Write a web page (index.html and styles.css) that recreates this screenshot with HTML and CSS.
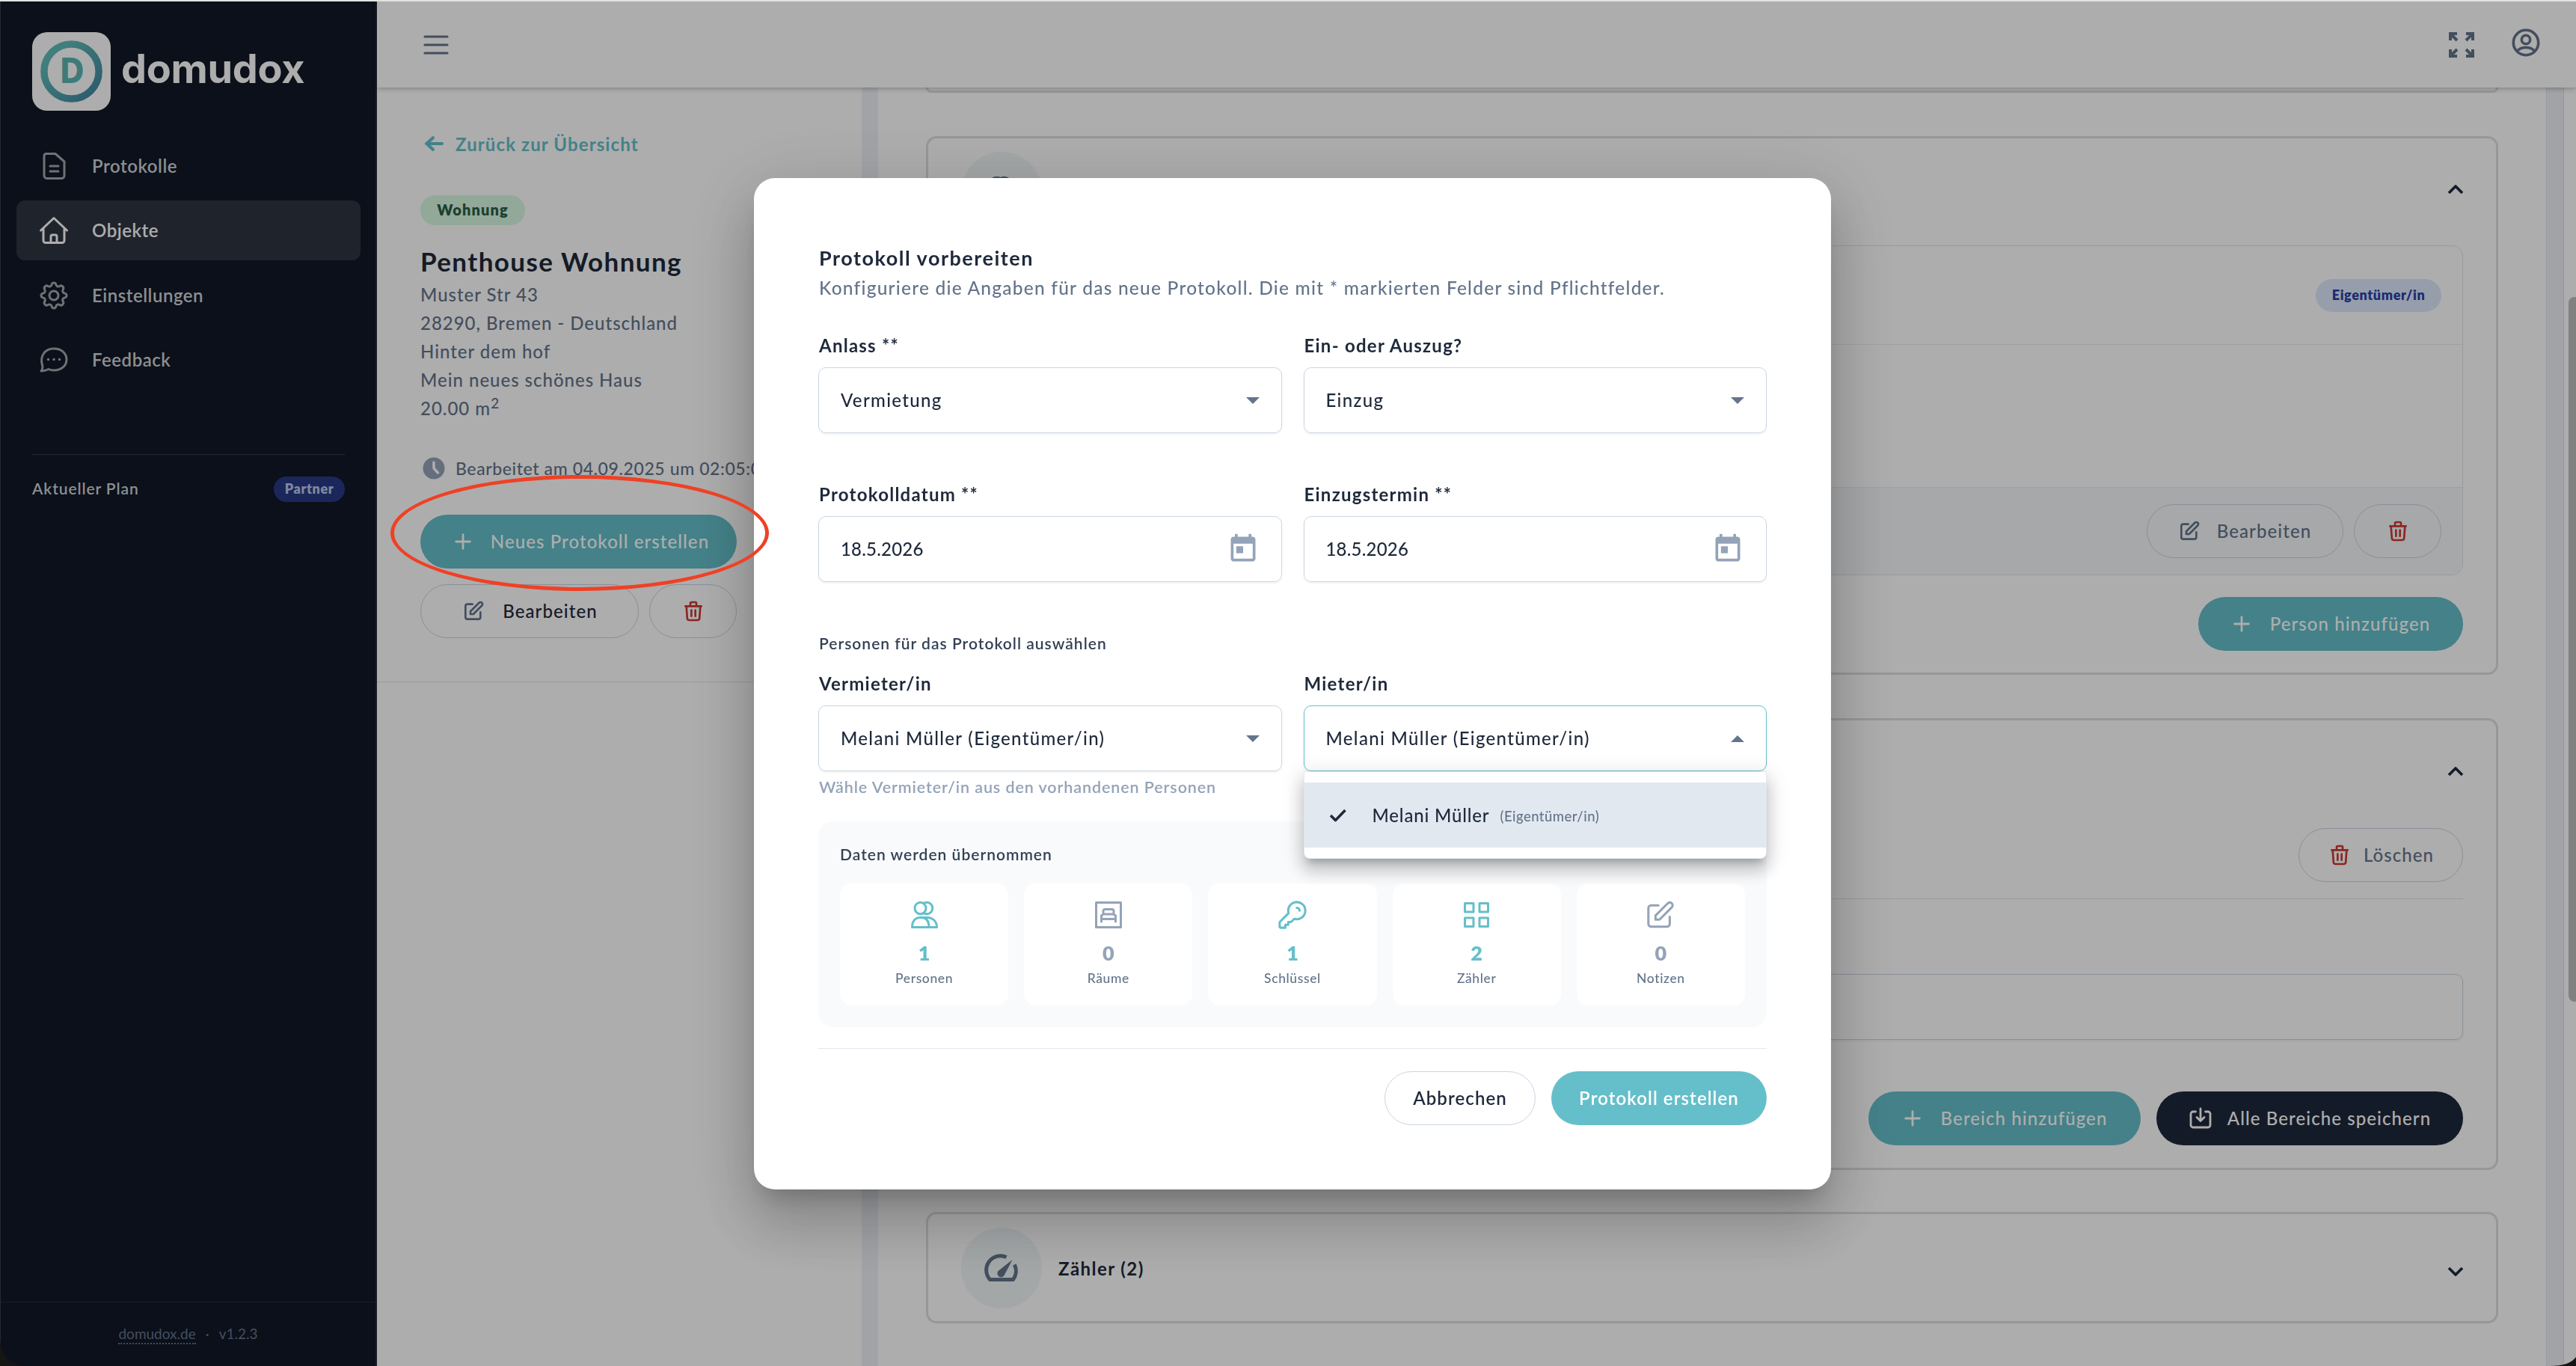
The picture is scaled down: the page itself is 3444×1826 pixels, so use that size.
FILE: index.html
```
<!DOCTYPE html>
<html lang="de">
<head>
  <meta charset="UTF-8" />
  <meta name="viewport" content="width=device-width, initial-scale=1.0"/>
  <title>domudox - Objekte</title>
  <link rel="stylesheet" href="styles.css">
</head>
<body>

  <svg class="sprite">
    <symbol id="i-edit" viewBox="0 0 24 24"><path d="M11 5H6a2 2 0 00-2 2v11a2 2 0 002 2h11a2 2 0 002-2v-5m-1.414-9.414a2 2 0 112.828 2.828L11.828 15H9v-2.828l8.586-8.586z"/></symbol>
    <symbol id="i-trash" viewBox="0 0 24 24"><path d="M19 7l-.867 12.142A2 2 0 0116.138 21H7.862a2 2 0 01-1.995-1.858L5 7m5 4v6m4-6v6m1-10V4a1 1 0 00-1-1h-4a1 1 0 00-1 1v3M4 7h16"/></symbol>
    <symbol id="i-plus" viewBox="0 0 24 24"><path d="M12 4v16M4 12h16"/></symbol>
    <symbol id="i-up" viewBox="0 0 24 24"><path d="M3 13l9-9 9 9" stroke-linecap="butt"/></symbol>
    <symbol id="i-down" viewBox="0 0 24 24"><path d="M3 12l9 9 9-9" stroke-linecap="butt"/></symbol>
    <symbol id="i-calendar" viewBox="0 0 24 24"><path d="M19 3h-1V1h-2v2H8V1H6v2H5c-1.11 0-1.99.9-1.99 2L3 19c0 1.1.89 2 2 2h14c1.1 0 2-.9 2-2V5c0-1.1-.9-2-2-2zm0 16H5V8h14v11zM7 10h5v5H7z"/></symbol>
    <symbol id="i-users" viewBox="0 0 40 40"><ellipse cx="14.500" cy="11" rx="7.500" ry="7.800"/><path d="M18.500 4.600a7.800 7.800 0 1 1 0 12.800M3.500 36.500c0-8 4-13 11.500-13s11 5 11 13zM16 23.500h7c8 0 13.500 5 13.500 13H26"/></symbol>
  </svg>

  <div class="app">
    <aside class="sidebar">
      <div class="brand">
        <svg class="logo" viewBox="0 0 105 105">
          <defs>
            <linearGradient id="ring" x1="0" y1="0" x2="1" y2="1">
              <stop offset="0.2" stop-color="#5fbcb8"/>
              <stop offset="1" stop-color="#41839e"/>
            </linearGradient>
          </defs>
          <rect width="105" height="105" rx="20" fill="#fff"/>
          <circle cx="52.500" cy="52.500" r="36.600" fill="none" stroke="url(#ring)" stroke-width="9.500"/>
          <text x="53.500" y="68" text-anchor="middle" font-family="DejaVu Sans, sans-serif" font-weight="700" font-size="47" textLength="34" lengthAdjust="spacingAndGlyphs" fill="#5bb5b3">D</text>
        </svg>
        <span class="brand-name">domudox</span>
      </div>

      <nav class="menu">
        <a class="menu-item">
          <svg viewBox="0 0 40 40"><path d="M9.500 3.500H22L34 14v18.500a4 4 0 0 1-4 4H11a4 4 0 0 1-4-4v-26a3 3 0 0 1 2.500-3zM15 20h11M15 27h11"/></svg>
          <span>Protokolle</span>
        </a>
        <a class="menu-item active">
          <svg viewBox="0 0 40 40"><path d="M2.500 20L20 3.500L37.500 20M6 17v16.500a3 3 0 0 0 3 3h22a3 3 0 0 0 3-3V17M16 36v-8a2 2 0 0 1 2-2h4a2 2 0 0 1 2 2v8"/></svg>
          <span>Objekte</span>
        </a>
        <a class="menu-item">
          <svg viewBox="0 0 40 40"><circle cx="20" cy="20" r="6"/><path d="M17.100 5.500c.7-3.400 5.100-3.400 5.800 0a3.200 3.200 0 0 0 4.900 2c2.800-1.900 6.300 1.500 4.500 4.500a3.200 3.200 0 0 0 2.200 5.100c3.400.7 3.400 5.100 0 5.800a3.200 3.200 0 0 0-2.200 5.100c1.800 3-1.700 6.400-4.500 4.500a3.200 3.200 0 0 0-4.900 2c-.7 3.400-5.100 3.400-5.800 0a3.200 3.200 0 0 0-4.900-2c-2.800 1.900-6.300-1.500-4.500-4.500a3.200 3.200 0 0 0-2.200-5.100c-3.400-.7-3.400-5.100 0-5.800a3.200 3.200 0 0 0 2.200-5.100c-1.800-3 1.700-6.400 4.500-4.500a3.200 3.200 0 0 0 4.900-2z"/></svg>
          <span>Einstellungen</span>
        </a>
        <a class="menu-item">
          <svg viewBox="0 0 40 40"><path d="M3 35c2-2.500 2.500-4.500 1.500-8C1 15 8 5 20 5c10 0 17 6 17 14.500S30 34 20 34c-3 0-5-.5-7-1.500C10 34 7 35 3 35z"/><path class="dots" d="M12.500 19.500h.1M20 19.500h.1M27.500 19.500h.1"/></svg>
          <span>Feedback</span>
        </a>
      </nav>

      <div class="plan">
        <span class="plan-label">Aktueller Plan</span>
        <span class="plan-badge">Partner</span>
      </div>

      <footer class="sidebar-footer">
        <a>domudox.de</a><i>·</i><span>v1.2.3</span>
      </footer>
    </aside>

    <div class="page">
      <header class="topbar">
        <svg class="burger" viewBox="0 0 36 28"><path d="M3 3h30M3 14h30M3 25h30"/></svg>
        <svg class="expand" viewBox="0 0 34 34"><path d="M2 11V2h9M2 2l9 9M23 2h9v9M32 2l-9 9M2 23v9h9M2 32l9-9M32 23v9h-9M32 32l-9-9"/></svg>
        <svg class="account" viewBox="0 0 40 40"><circle cx="20" cy="20" r="16.700"/><circle cx="20" cy="16" r="5.700"/><path d="M8.500 31c3-3.500 7-4.500 11.500-4.500s8.500 1 11.500 4.500"/></svg>
      </header>

      <div class="content">
        <section class="details">
          <a class="back">
            <svg viewBox="0 0 32 32"><path d="M27 16H6M15 8l-8.500 8 8.500 8"/></svg>
            <span>Zurück zur Übersicht</span>
          </a>
          <span class="type-badge">Wohnung</span>
          <h1>Penthouse Wohnung</h1>
          <p class="address">Muster Str 43<br>28290, Bremen - Deutschland<br>Hinter dem hof<br>Mein neues schönes Haus<br>20.00 m<sup>2</sup></p>
          <div class="edited">
            <svg viewBox="0 0 36 36"><circle cx="18" cy="18" r="14.500" fill="currentColor"/><path d="M18 10v8l5.500 6" fill="none" stroke="#fff" stroke-width="3.500" stroke-linecap="round"/></svg>
            <span>Bearbeitet am 04.09.2025 um 02:05:00</span>
          </div>
          <button class="btn primary btn-new"><svg><use href="#i-plus"/></svg>Neues Protokoll erstellen</button>
          <div class="btn-row">
            <button class="btn outline btn-edit"><svg><use href="#i-edit"/></svg>Bearbeiten</button>
            <button class="btn outline btn-trash"><svg><use href="#i-trash"/></svg></button>
          </div>
        </section>

        <section class="panels">
          <div class="panel stub"></div>

          <div class="panel">
            <div class="panel-head">
              <span class="round"><svg class="people-icon" viewBox="0 0 40 40"><use href="#i-users"/></svg></span>
              <svg class="chevron"><use href="#i-up"/></svg>
            </div>
            <div class="person">
              <div class="person-head"><span class="role">Eigentümer/in</span></div>
              <div class="person-body"></div>
              <div class="person-foot">
                <button class="btn outline muted btn-person"><svg><use href="#i-edit"/></svg>Bearbeiten</button>
                <button class="btn outline btn-trash"><svg><use href="#i-trash"/></svg></button>
              </div>
            </div>
            <div class="panel-actions">
              <button class="btn primary btn-add-person"><svg><use href="#i-plus"/></svg>Person hinzufügen</button>
            </div>
          </div>

          <div class="panel">
            <div class="panel-head">
              <span class="round"></span>
              <svg class="chevron"><use href="#i-up"/></svg>
            </div>
            <div class="area-head">
              <button class="btn outline muted btn-delete"><svg><use href="#i-trash"/></svg>Löschen</button>
            </div>
            <div class="area-input"></div>
            <div class="panel-actions area-actions">
              <button class="btn primary btn-area"><svg><use href="#i-plus"/></svg>Bereich hinzufügen</button>
              <button class="btn dark btn-save"><svg viewBox="0 0 32 32"><path d="M9.500 7H6a3 3 0 0 0-3 3v15a3 3 0 0 0 3 3h20a3 3 0 0 0 3-3V10a3 3 0 0 0-3-3h-3.500M16 3v16M11 14.500l5 5 5-5"/></svg>Alle Bereiche speichern</button>
            </div>
          </div>

          <div class="panel">
            <div class="panel-head">
              <span class="round"><svg class="gauge" viewBox="0 0 46 40"><path d="M29.500 5.500A19 19 0 0 0 7.500 35.500h31A19 19 0 0 0 40.300 15.500"/><path class="needle" d="M37.500 9L19 23.500a5 5 0 1 0 7.500 6.500z"/></svg></span>
              <span class="panel-title">Zähler (2)</span>
              <svg class="chevron"><use href="#i-down"/></svg>
            </div>
          </div>
        </section>

        <div class="gutter"></div>
        <div class="scrollbar"><div class="thumb"></div></div>
      </div>
    </div>
  </div>

  <div class="backdrop">
    <div class="modal">
      <h2>Protokoll vorbereiten</h2>
      <p class="subtitle">Konfiguriere die Angaben für das neue Protokoll. Die mit * markierten Felder sind Pflichtfelder.</p>

      <div class="row">
        <div class="field">
          <label>Anlass **</label>
          <div class="input"><span>Vermietung</span><i class="caret"></i></div>
        </div>
        <div class="field">
          <label>Ein- oder Auszug?</label>
          <div class="input"><span>Einzug</span><i class="caret"></i></div>
        </div>
      </div>

      <div class="row">
        <div class="field">
          <label>Protokolldatum **</label>
          <div class="input"><span class="date">18.5.2026</span><svg class="cal"><use href="#i-calendar"/></svg></div>
        </div>
        <div class="field">
          <label>Einzugstermin **</label>
          <div class="input"><span class="date">18.5.2026</span><svg class="cal"><use href="#i-calendar"/></svg></div>
        </div>
      </div>

      <p class="section-title">Personen für das Protokoll auswählen</p>
      <div class="row people">
        <div class="field">
          <label>Vermieter/in</label>
          <div class="input"><span>Melani Müller (Eigentümer/in)</span><i class="caret"></i></div>
          <p class="hint">Wähle Vermieter/in aus den vorhandenen Personen</p>
        </div>
        <div class="field">
          <label>Mieter/in</label>
          <div class="input open"><span>Melani Müller (Eigentümer/in)</span><i class="caret up"></i></div>
          <div class="dropdown">
            <div class="option">
              <svg viewBox="0 0 24 20"><path d="M2 10l6.500 6.500L21.500 3"/></svg>
              <span>Melani Müller</span>
              <small>(Eigentümer/in)</small>
            </div>
          </div>
        </div>
      </div>

      <div class="summary">
        <p class="section-title">Daten werden übernommen</p>
        <div class="stats">
          <div class="stat">
            <svg viewBox="0 0 40 40"><use href="#i-users"/></svg>
            <b>1</b><span>Personen</span>
          </div>
          <div class="stat off">
            <svg viewBox="0 0 40 40"><path d="M3.500 3.500h33v33h-33zM10.500 29v-8l2.500-2v-4a2.500 2.500 0 0 1 2.500-2.500h9a2.500 2.500 0 0 1 2.500 2.500v4l2.500 2v8M10.500 25.500h19M13 19h14"/></svg>
            <b>0</b><span>Räume</span>
          </div>
          <div class="stat">
            <svg viewBox="1.500 1.500 21 21" class="thin"><path d="M15 7a2 2 0 012 2m4 0a6 6 0 01-7.743 5.743L11 17H9v2H7v2H4a1 1 0 01-1-1v-2.586a1 1 0 01.293-.707l5.964-5.964A6 6 0 1121 9z"/></svg>
            <b>1</b><span>Schlüssel</span>
          </div>
          <div class="stat">
            <svg viewBox="0 0 40 40"><path d="M4.500 4.500h11.500v11.500h-11.500zM24 4.500h11.500v11.500h-11.500zM4.500 24h11.500v11.500h-11.500zM24 24h11.500v11.500h-11.500z"/></svg>
            <b>2</b><span>Zähler</span>
          </div>
          <div class="stat off">
            <svg viewBox="2 1.200 21 21" class="thin"><use href="#i-edit" width="24" height="24"/></svg>
            <b>0</b><span>Notizen</span>
          </div>
        </div>
      </div>

      <div class="modal-actions">
        <button class="btn outline btn-cancel">Abbrechen</button>
        <button class="btn primary btn-create">Protokoll erstellen</button>
      </div>
    </div>
  </div>

  <div class="marker"></div>
  <div class="window-top"></div>
  <svg class="corner left" viewBox="0 0 36 36"><path d="M0 0v36h36C14 36 1 22 0 0z"/></svg>
  <svg class="corner right" viewBox="0 0 36 12"><path d="M36 0v12H0c20 0 30-4 36-12z"/></svg>

</body>
</html>
```
FILE: styles.css
```
* { margin: 0; padding: 0; box-sizing: border-box; }

body {
  width: 3444px;
  height: 1826px;
  overflow: hidden;
  font-family: Lato, "Liberation Sans", sans-serif;
  font-size: 24px;
  font-weight: 500;
  letter-spacing: 0.045em;
  color: #1e293b;
  background: #fff;
  white-space: nowrap;
}

svg { flex: none; fill: none; stroke: currentColor; stroke-linecap: round; stroke-linejoin: round; }
.sprite { display: none; }

.app { display: flex; height: 1826px; }

/* sidebar */
.sidebar {
  width: 504px;
  flex: none;
  display: flex;
  flex-direction: column;
  background: #111827;
  border-left: 1px solid #363b49;
  border-right: 2px solid #262c3a;
}

.brand { display: flex; align-items: center; padding: 43px 0 0 42px; }
.logo { width: 105px; height: 105px; stroke: none; }
.logo circle { stroke: url(#ring); }
.brand-name {
  margin-left: 14px;
  padding-bottom: 8px;
  font: 700 54px/80px Inter, sans-serif;
  letter-spacing: -0.006em;
  color: #fff;
}

.menu { display: flex; flex-direction: column; gap: 6.300px; padding: 34px 20px 0 21px; }
.menu-item {
  display: flex;
  align-items: center;
  height: 80px;
  padding-left: 30px;
  border-radius: 11px;
  font-weight: 600;
  letter-spacing: 0.022em;
  color: #d0d2d6;
}
.menu-item span { padding-bottom: 1px; }
.menu-item svg { width: 40px; height: 40px; margin-right: 31px; stroke-width: 3; color: #a3a7ae; }
.menu-item .dots { stroke-width: 3.500; }
.menu-item.active { background: #2f3441; color: #fff; }
.menu-item.active svg { color: #fff; }

.plan {
  display: flex;
  align-items: center;
  justify-content: space-between;
  margin: 86px 41px 0 42px;
  padding-top: 29px;
  border-top: 1px solid #373d4a;
}
.plan-label { padding-bottom: 2px; font-size: 21px; font-weight: 600; letter-spacing: 0.043em; color: #d0d2d6; }
.plan-badge {
  width: 95px;
  height: 34px;
  border-radius: 17px;
  background: #283a87;
  color: #bccae8;
  font-size: 18px;
  font-weight: 800;
  line-height: 33px;
  text-align: center;
  letter-spacing: 0.035em;
}

.sidebar-footer {
  display: flex;
  justify-content: center;
  gap: 13px;
  height: 86px;
  margin-top: auto;
  padding-top: 29px;
  border-top: 1px solid #262c3a;
  font-size: 19px;
  line-height: 26px;
  font-weight: 400;
  letter-spacing: 0;
  color: #64748b;
}
.sidebar-footer a { height: 27px; border-bottom: 2px dotted #64748b; }
.sidebar-footer i { font-style: normal; }

/* top bar */
.page { flex: 1; display: flex; flex-direction: column; }
.topbar {
  display: flex;
  align-items: center;
  height: 117px;
  flex: none;
  padding: 2px 47px 0 61px;
  color: #64748b;
  box-shadow: 0 1px 7px rgba(0, 0, 0, 0.3);
  position: relative;
  z-index: 1;
  background: #fff;
}
.burger { width: 36px; height: 28px; stroke-width: 3.200; margin-right: auto; }
.expand { width: 34px; height: 34px; stroke-width: 4; stroke-linecap: butt; margin-right: 49px; stroke-linejoin: miter; }
.account { width: 40px; height: 40px; stroke-width: 3.600; margin-bottom: 6px; }

.content { flex: 1; display: flex; overflow: hidden; }

/* object details */
.details { width: 648px; flex: none; display: flex; flex-direction: column; padding: 57px 0 0 58px; height: 795px; border-bottom: 1px solid #e0e3e8; }
.back { display: flex; align-items: center; gap: 13px; height: 36px; color: #65bfca; font-weight: 700; letter-spacing: 0.046em; }
.back svg { width: 32px; height: 32px; margin-left: 2px; stroke-width: 4; }
.type-badge {
  width: 140px;
  height: 40px;
  margin-top: 51px;
  border-radius: 20px;
  background: #d7f8e2;
  color: #295f47;
  font-size: 20px;
  line-height: 39px;
  font-weight: 800;
  text-align: center;
}
h1 { margin-top: 26px; font-size: 35px; line-height: 44px; font-weight: 700; letter-spacing: 0.04em; color: #202939; }
.address { margin-top: 4px; line-height: 38px; letter-spacing: 0.041em; color: #64748b; }
.address sup { font-size: 19px; line-height: 0; }
.edited { display: flex; align-items: center; gap: 11px; height: 36px; margin-top: 43px; font-size: 23px; letter-spacing: 0.026em; color: #64748b; }
.edited svg { width: 36px; height: 36px; stroke: none; color: #94a3b8; }

.btn {
  display: flex;
  align-items: center;
  justify-content: center;
  height: 72px;
  padding-bottom: 1px;
  border: 0;
  border-radius: 36px;
  font: inherit;
  letter-spacing: inherit;
  color: #1e293b;
  background: #fff;
}
.btn svg { width: 32px; height: 32px; stroke-width: 2; color: #64748b; }
.btn.primary { background: #65bfca; color: #fff; }
.btn.primary svg, .btn.dark svg { color: #fff; }
.btn.dark { background: #1e293b; color: #fff; }
.btn.outline { border: 1px solid #cbd5e1; }
.btn.muted { color: #64748b; }
.btn-trash { width: 117px; }
.btn.btn-trash svg, .btn.btn-delete svg { color: #cd3832; }
.btn.primary svg { width: 28px; height: 28px; stroke-width: 2.400; }

.btn-new { width: 423px; margin-top: 44px; gap: 23px; padding-left: 6px; }
.btn-row { display: flex; gap: 14px; margin-top: 21px; }
.btn-edit { width: 292px; gap: 23px; }

/* panels */
.panels {
  flex: 1;
  display: flex;
  flex-direction: column;
  gap: 58px;
  padding: 0 64px;
  border-left: 22px solid #eef1f7;
}
.panel { flex: none; padding: 0 44px; border: 3px solid #dfdfdf; border-radius: 14px; }
.panel.stub { height: 7px; border-top: 0; border-radius: 0 0 14px 14px; }
.panel:last-child { margin-top: -2px; }
.panel-head { display: flex; align-items: center; height: 143px; }
.round {
  display: flex;
  align-items: center;
  justify-content: center;
  width: 108px;
  height: 108px;
  border-radius: 50%;
  background: #f0f6f8;
  color: #64748b;
}
.round .people-icon { width: 46px; height: 46px; stroke-width: 3.500; }
.round .gauge { width: 46px; height: 40px; stroke-width: 5; stroke-linecap: butt; }
.gauge .needle { fill: currentColor; stroke: none; }
.panel-title { margin-left: 22px; padding-top: 2px; font-weight: 700; letter-spacing: 0.06em; color: #1e293b; }
.chevron { width: 24px; height: 24px; margin-left: auto; stroke-width: 3.600; color: #1e293b; margin-right: -2px; }

.person { height: 441px; border: 1px solid #e2e4e8; border-radius: 14px; overflow: hidden; }
.person-head { display: flex; align-items: center; justify-content: flex-end; height: 132px; padding-right: 28px; border-bottom: 1px solid #eceef1; }
.role {
  width: 168px;
  height: 44px;
  border-radius: 22px;
  background: #dee9fe;
  color: #2a3ea8;
  font-size: 18px;
  line-height: 43px;
  font-weight: 800;
  letter-spacing: 0.035em;
  text-align: center;
}
.person-body { height: 190px; }
.person-foot { display: flex; align-items: center; justify-content: flex-end; gap: 14px; height: 117px; padding-right: 28px; border-top: 1px solid #e8ebef; background: #f5f8fb; }
.btn-person { width: 263px; gap: 21px; padding-right: 2px; }
.person-foot .btn { background: none; }
.panel-actions { display: flex; justify-content: flex-end; gap: 21px; padding: 29px 0; }
.btn-add-person { width: 354px; gap: 24px; }

.area-head { display: flex; justify-content: flex-end; height: 96px; padding-top: 1px; border-bottom: 1px solid #e2e4e8; }
.btn-delete { width: 220px; gap: 16px; }
.area-input { height: 88px; margin-top: 100px; border: 1px solid #cbd5e1; border-radius: 10px; box-shadow: 0 2px 3px rgba(0, 0, 0, 0.05); }
.area-actions { padding-top: 69px; padding-bottom: 30px; }
.btn-area { width: 364px; gap: 24px; }
.btn-save { width: 410px; gap: 20px; }
.btn-save svg { stroke-width: 2.800; }

.gutter { width: 23px; background: #eef1f7; border-left: 1px solid #e2e4ec; }
.scrollbar { width: 17px; border-left: 1px solid #dfdfdf; padding: 280px 0 0 6px; }
.thumb { height: 942px; background: #bebebe; border-radius: 8px 0 0 8px; }

/* modal */
.backdrop {
  position: fixed;
  inset: 0;
  display: flex;
  justify-content: center;
  padding: 238px 0 0 12px;
  align-items: flex-start;
  background: rgba(0, 0, 0, 0.32);
  z-index: 10;
}
.modal {
  width: 1440px;
  height: 1352px;
  padding: 90px 86px 0;
  border-radius: 28px;
  background: #fff;
  box-shadow: 0 22px 30px -14px rgba(0, 0, 0, 0.2), 0 48px 76px 6px rgba(0, 0, 0, 0.14), 0 18px 92px 16px rgba(0, 0, 0, 0.12);
}
h2 { font-size: 27px; line-height: 34px; font-weight: 700; letter-spacing: 0.056em; color: #1e293b; padding-left: 1px; }
.subtitle { height: 36px; margin: 5px 0 45px 1px; font-size: 24.500px; line-height: 36px; letter-spacing: 0.05em; color: #64748b; }

.row { display: grid; grid-template-columns: 619.500px 619.500px; gap: 29px; margin-bottom: 68px; }
.field { position: relative; }
.field label { display: block; margin: 0 0 15px 1px; font-size: 24px; line-height: 28px; font-weight: 700; letter-spacing: 0.052em; }
.input {
  display: flex;
  align-items: center;
  justify-content: space-between;
  height: 88px;
  padding: 0 29px 0 29px;
  border: 1px solid #cbd5e1;
  border-radius: 10px;
  box-shadow: 0 2px 3px rgba(0, 0, 0, 0.05);
  letter-spacing: 0.055em;
}
.input.open { border-color: #65bfca; }
.input span { padding-bottom: 1px; }
.input .date { font-size: 24px; letter-spacing: 0.008em; }
.caret { border: 9px solid transparent; border-top-color: #64748b; border-bottom-width: 0; }
.caret.up { border-width: 0 9px 9px; border-bottom-color: #64748b; }
.cal { width: 44px; height: 44px; fill: #94a3b8; stroke: none; }

.section-title { font-size: 21px; line-height: 28px; font-weight: 600; letter-spacing: 0.048em; color: #334155; }
.modal > .section-title { margin: 0 0 26px 1px; }
.people { margin-bottom: 0; }
.hint { margin: 7px 0 32px 1px; font-size: 21.500px; line-height: 28px; font-weight: 600; letter-spacing: 0.042em; color: #94a3b8; }

.dropdown {
  position: absolute;
  top: 131px;
  left: 0;
  width: 619px;
  height: 117px;
  padding: 14px 0;
  background: #fff;
  border: 1px solid #e2e8f0;
  border-radius: 0 0 8px 8px;
  box-shadow: 0 10px 10px -6px rgba(0, 0, 0, 0.2), 0 16px 20px 2px rgba(0, 0, 0, 0.14), 0 6px 28px 4px rgba(0, 0, 0, 0.12);
  z-index: 2;
}
.option { display: flex; align-items: center; height: 87px; padding-left: 33px; background: #e2e8f0; letter-spacing: 0.034em; }
.option svg { width: 24px; height: 20px; margin-right: 34px; stroke-width: 3.500; stroke-linecap: butt; }
.option small { margin-left: 14px; padding-top: 3px; font-size: 18.500px; letter-spacing: 0.025em; color: #64748b; }

.summary { height: 275px; padding: 30px 29px; border-radius: 20px; background: #f8fafc; }
.stats { display: grid; grid-template-columns: repeat(5, 1fr); gap: 21px; margin-top: 25px; }
.stat { display: flex; flex-direction: column; align-items: center; height: 163px; padding-top: 22px; border-radius: 15px; background: #fff; color: #65bfca; }
.stat svg { width: 40px; height: 40px; stroke-width: 3; }
.stat svg.thin { stroke-width: 1.600; }
.stat b { margin: 15px 0 6px; font-size: 27px; line-height: 32px; font-weight: 800; letter-spacing: 0; }
.stat span { font-size: 17.500px; line-height: 24px; letter-spacing: 0.035em; color: #64748b; }
.stat.off { color: #94a3b8; }

.modal-actions { display: flex; justify-content: flex-end; gap: 21px; margin-top: 28px; padding-top: 30px; border-top: 1px solid #e2e8f0; }
.btn-cancel, .btn-create { font-weight: 600; }
.btn-cancel { width: 202px; }
.btn-create { width: 288px; }

/* annotation and window frame */
.marker { position: fixed; left: 522px; top: 635px; width: 506px; height: 155px; border: 5px solid #ee4126; border-radius: 50%; z-index: 20; }
.window-top { position: fixed; top: 0; left: 0; right: 0; height: 2px; background: #e0e3e0; z-index: 20; }
.corner { position: fixed; bottom: 0; z-index: 20; fill: #151515; stroke: none; }
.corner.left { left: 0; width: 36px; height: 36px; }
.corner.right { right: 0; width: 36px; height: 12px; }
```
